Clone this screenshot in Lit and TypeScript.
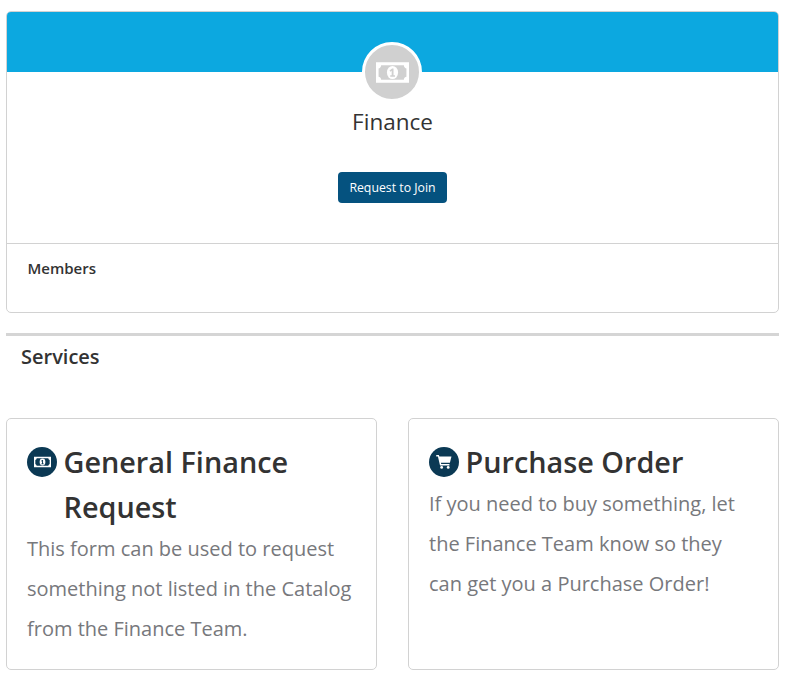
import { LitElement, html, css } from "lit";
import { customElement } from "lit/decorators.js";

const billIcon = html`
  <svg viewBox="0 0 32 20" aria-hidden="true">
    <path
      fill-rule="evenodd"
      fill="currentColor"
      d="M0 0H32V20H0ZM5 3C5 5 3.5 6 2.5 6V14C3.5 14 5 15 5 17H27C27 15 28.5 14 29.5 14V6C28.5 6 27 5 27 3Z"
    />
    <ellipse cx="16" cy="10" rx="5.4" ry="6.4" fill="currentColor" />
    <path
      fill="var(--bill-mark)"
      d="M15.6 6.2H17V12.6H18.4V14H13.8V12.6H15.2V8.2L14 9.2L13.1 8.1Z"
    />
  </svg>
`;

const cartIcon = html`
  <svg viewBox="0 0 20 18" aria-hidden="true">
    <path
      fill="currentColor"
      d="M0 0H3.4L4 2H19.6L17.6 10H6L6.4 11.6H17V13.4H4.9L2.2 1.8H0Z"
    />
    <circle cx="7" cy="16" r="1.8" fill="currentColor" />
    <circle cx="15.4" cy="16" r="1.8" fill="currentColor" />
  </svg>
`;

@customElement("app-root")
export class AppRoot extends LitElement {
  static styles = css`
    :host {
      display: block;
      width: 773px;
      margin-left: 6px;
      padding-top: 11px;
      font-family: "Open Sans", "Liberation Sans", sans-serif;
      color: #333;
    }

    .group-card {
      height: 302px;
      box-sizing: border-box;
      border: 1px solid #d2d2d2;
      border-radius: 5px;
      overflow: hidden;
      display: flex;
      flex-direction: column;
    }

    .banner {
      height: 60px;
      flex: none;
      background: #0ca8e0;
    }

    .summary {
      height: 172px;
      flex: none;
      box-sizing: border-box;
      border-bottom: 1px solid #d2d2d2;
      display: flex;
      flex-direction: column;
      align-items: center;
    }

    .avatar {
      width: 60px;
      height: 60px;
      margin: -30px 1px 0 0;
      box-sizing: border-box;
      border: 3px solid #fff;
      border-radius: 50%;
      background: #d0d0d0;
      color: #fff;
      --bill-mark: #d0d0d0;
      display: flex;
      align-items: center;
      justify-content: center;
    }

    .avatar svg {
      width: 33px;
      height: 21px;
    }

    .group-name {
      margin: 2px 0 0;
      font-size: 22.5px;
      font-weight: 400;
      line-height: 36px;
      color: #333;
    }

    .join {
      margin-top: 32px;
      width: 109px;
      height: 31px;
      padding: 0;
      border: none;
      border-radius: 4px;
      background: #05527f;
      color: #fff;
      font-family: inherit;
      font-size: 12.3px;
      cursor: pointer;
    }

    .members {
      padding: 14px 20.5px;
      font-size: 15px;
      font-weight: 600;
      line-height: 20px;
      color: #333;
    }

    .services-head {
      margin-top: 20px;
      border-top: 3px solid #d5d5d5;
      padding: 7px 15px 0;
      height: 75px;
      font-size: 20px;
      font-weight: 600;
      line-height: 27px;
      color: #333;
    }

    .services {
      display: grid;
      grid-template-columns: 371px 371px;
      justify-content: space-between;
    }

    .service {
      height: 252px;
      box-sizing: border-box;
      border: 1px solid #d2d2d2;
      border-radius: 5px;
      padding: 20px;
    }

    .service-title {
      margin: 0;
      display: flex;
      gap: 6.5px;
      font-size: 28.8px;
      font-weight: 600;
      line-height: 45px;
      color: #333;
    }

    .badge {
      flex: none;
      width: 30px;
      height: 30px;
      margin-top: 8px;
      border-radius: 50%;
      background: #0b3954;
      color: #fff;
      --bill-mark: #0b3954;
      display: flex;
      align-items: center;
      justify-content: center;
    }

    .badge svg {
      width: 17px;
      height: 12px;
    }

    .badge.cart svg {
      width: 16px;
      height: 14px;
    }

    .service-text {
      margin: 0;
      font-size: 20px;
      line-height: 40px;
      color: #77787c;
    }
  `;

  render() {
    return html`
      <section class="group-card">
        <div class="banner"></div>
        <div class="summary">
          <div class="avatar">${billIcon}</div>
          <h1 class="group-name">Finance</h1>
          <button class="join">Request to Join</button>
        </div>
        <div class="members">Members</div>
      </section>

      <div class="services-head">Services</div>

      <div class="services">
        <article class="service">
          <h2 class="service-title">
            <span class="badge">${billIcon}</span>
            <span>General Finance Request</span>
          </h2>
          <p class="service-text">
            This form can be used to request something not listed in the Catalog
            from the Finance Team.
          </p>
        </article>
        <article class="service">
          <h2 class="service-title">
            <span class="badge cart">${cartIcon}</span>
            <span>Purchase Order</span>
          </h2>
          <p class="service-text">
            If you need to buy something, let the Finance Team know so they can
            get you a Purchase Order!
          </p>
        </article>
      </div>
    `;
  }
}
